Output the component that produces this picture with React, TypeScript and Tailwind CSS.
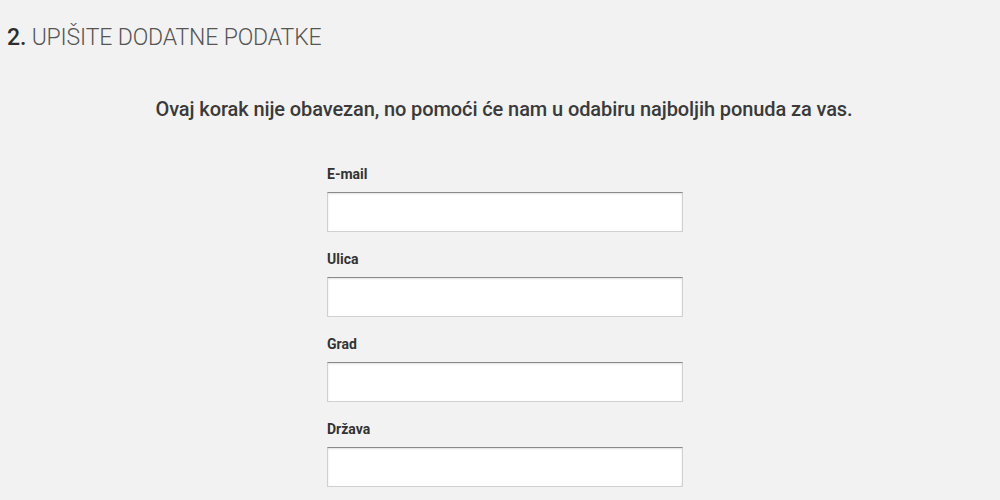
import React from 'react';

const fields = ['E-mail', 'Ulica', 'Grad', 'Država'];

const App: React.FC = () => {
  return (
    <div className="w-[1000px] h-[500px] overflow-hidden bg-[#f2f2f2] font-['Roboto',sans-serif]">
      <h2 className="pl-[7px] pt-[24px] text-[23px] leading-[28px] text-[#555] font-light tracking-[-0.15px]">
        <span className="font-medium text-[#2e2e2e]">2.</span> UPIŠITE DODATNE PODATKE
      </h2>
      <p className="mt-[44px] pl-[8px] text-center text-[20px] leading-[26px] font-medium text-[#3a3a3a] tracking-[-0.1px]">
        Ovaj korak nije obavezan, no pomoći će nam u odabiru najboljih ponuda za vas.
      </p>
      <div className="mt-[44px] w-[356px] ml-[327px] flex flex-col gap-[19px]">
        {fields.map(f => (
          <div key={f} className="flex flex-col gap-[9px]">
            <label className="text-[14px] leading-[17px] font-bold text-[#333]">{f}</label>
            <input
              type="text"
              className="h-[40px] w-full bg-white border border-[#d0d0d0] border-t-[#8a8a8a] shadow-[inset_0_1px_2px_rgba(0,0,0,0.12)] outline-none"
            />
          </div>
        ))}
      </div>
    </div>
  );
};

export default App;
